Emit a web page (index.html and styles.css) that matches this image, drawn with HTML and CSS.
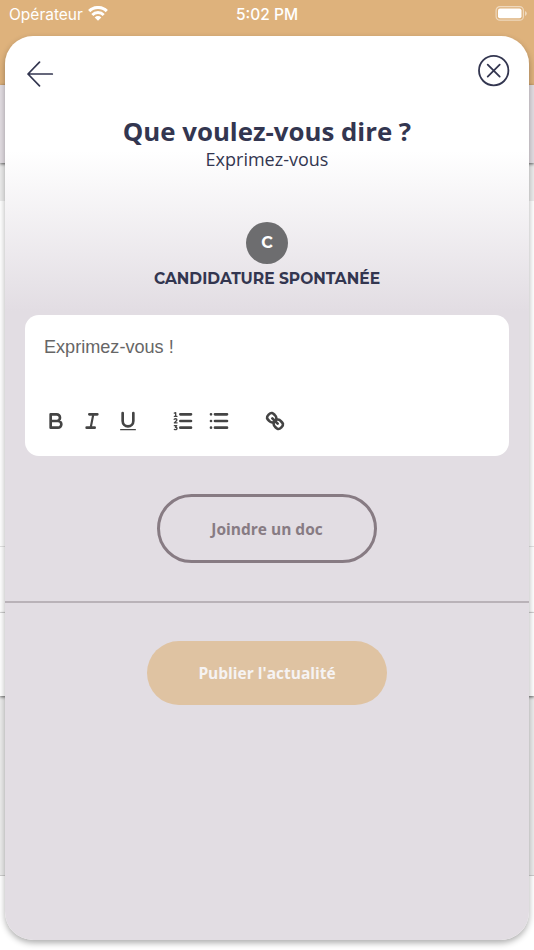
FILE: index.html
```html
<!DOCTYPE html>
<html lang="fr">
<head>
    <meta charset="UTF-8">
    <meta name="viewport" content="width=device-width, initial-scale=1.0">
    <title>Que voulez-vous dire ?</title>
    <link rel="stylesheet" href="styles.css">
</head>
<body>

    <!-- Feed behind the modal -->
    <div class="feed">
        <div class="feed-header">
            <div class="status-bar">
                <div class="carrier">
                    <span>Opérateur</span>
                    <svg width="20" height="15" viewBox="0 0 20 15">
                        <path d="M1.2 5.1a12.6 12.6 0 0 1 17.6 0" fill="none" stroke="#fff" stroke-width="3.1"/>
                        <path d="M4.3 8.9a8 8 0 0 1 11.4 0" fill="none" stroke="#fff" stroke-width="2.9"/>
                        <path d="M10 14.7l-3.3-3.2a4.6 4.6 0 0 1 6.6 0z" fill="#fff"/>
                    </svg>
                </div>
                <span class="time">5:02 PM</span>
                <svg class="battery" width="32" height="15" viewBox="0 0 32 15">
                    <rect x="1.1" y=".6" width="27.3" height="13.6" rx="3.8" fill="none" stroke="#fff" stroke-opacity=".5" stroke-width="1.2"/>
                    <rect x="3" y="2.5" width="23.5" height="9.8" rx="2" fill="#fff"/>
                    <path d="M30 5v5q1.8-.8 1.8-2.5T30 5z" fill="#fff" fill-opacity=".5"/>
                </svg>
            </div>
        </div>
        <div class="feed-tabs"></div>
        <div class="feed-gap"></div>
        <div class="feed-post"></div>
        <div class="feed-actions"></div>
        <div class="feed-comment"></div>
        <div class="feed-gap feed-gap-large"></div>
        <div class="feed-next"></div>
    </div>

    <div class="modal">
        <div class="modal-nav">
            <svg class="back" width="28" height="26" viewBox="0 0 28 26" fill="none" stroke="#333650" stroke-width="1.7" stroke-linecap="round" stroke-linejoin="round">
                <path d="M26.3 13H2M13.5 1.2L2 13L13.5 24.8"/>
            </svg>
            <svg class="close" width="32" height="32" viewBox="0 0 32 32" fill="none" stroke="#333650" stroke-width="1.8" stroke-linecap="round">
                <circle cx="15.7" cy="15.6" r="14.7"/>
                <path d="M9.7 9.6l12 12M21.7 9.6L9.7 21.6"/>
            </svg>
        </div>

        <h1>Que voulez-vous dire ?</h1>
        <p class="subtitle">Exprimez-vous</p>

        <div class="avatar">C</div>
        <h2>CANDIDATURE SPONTANÉE</h2>

        <div class="editor">
            <div class="placeholder">Exprimez-vous !</div>
            <div class="toolbar">
                <svg width="24" height="24" viewBox="0 0 18 18">
                    <path d="M5 4h4.5A2.5 2.5 0 0 1 12 6.5 2.5 2.5 0 0 1 9.5 9H5zM5 9h5.5a2.5 2.5 0 0 1 2.5 2.5 2.5 2.5 0 0 1-2.5 2.5H5z"/>
                </svg>
                <svg width="24" height="24" viewBox="0 0 18 18">
                    <path d="M7 4h6M5 14h6"/>
                    <path class="stem" d="M8 14l2-10"/>
                </svg>
                <svg width="24" height="24" viewBox="0 0 18 18">
                    <path d="M5 3v6a4 4 0 0 0 8 0V3"/>
                    <rect class="fill" x="3" y="15" width="12" height="1" rx=".5"/>
                </svg>
                <svg class="group-start" width="24" height="24" viewBox="0 0 18 18">
                    <path d="M7 4h8M7 9h8M7 14h8"/>
                    <path class="thin" d="M2.5 5.5h2M3.5 5.5V2.7l-1 .4M2.4 7.7q1.1-.8 1.9 0 .4.7-.4 1.3l-1.4 1.4h2.1M2.5 12.5h1.8l-1 1.2q1.3 0 1.2.9-.3 1.2-2 .7"/>
                </svg>
                <svg width="24" height="24" viewBox="0 0 18 18">
                    <path d="M6 4h9M6 9h9M6 14h9M3 4h.01M3 9h.01M3 14h.01"/>
                </svg>
                <svg class="group-start" width="24" height="24" viewBox="0 0 18 18">
                    <path d="M7 7l4 4"/>
                    <path d="M8.9 4.577a3.476 3.476 0 0 1 .36 4.679A3.476 3.476 0 0 1 4.577 8.9C3.185 7.5 2.035 6.4 4.217 4.217S7.5 3.185 8.9 4.577z"/>
                    <path d="M13.423 9.1a3.476 3.476 0 0 0-4.679-.36 3.476 3.476 0 0 0 .36 4.679c1.392 1.392 2.5 2.542 4.679.36s1.031-3.279-.36-4.679z"/>
                </svg>
            </div>
        </div>

        <button type="button" class="btn-attach">Joindre un doc</button>
        <hr>
        <button type="button" class="btn-publish">Publier l'actualité</button>
    </div>

</body>
</html>
```

FILE: styles.css
```css
* {
    box-sizing: border-box;
}
body {
    margin: 0;
    position: relative;
    height: 950px;
    overflow: hidden;
    font-family: "Open Sans", sans-serif;
    color: #333650;
    background-color: #fff;
}

/* Feed */
.feed-header {
    height: 85px;
    background-color: #deb27c;
}
.status-bar {
    display: grid;
    grid-template-columns: 1fr auto 1fr;
    align-items: center;
    height: 27px;
    padding: 0 7px 0 9px;
    color: #fff;
    font-family: Inter, sans-serif;
    font-size: 15.5px;
}
.carrier {
    display: flex;
    align-items: center;
    gap: 5px;
}
.carrier span,
.time {
    padding-top: 1px;
}
.time {
    margin-right: 2px;
    font-weight: 500;
}
.battery {
    justify-self: end;
}
.feed-tabs {
    position: relative;
    height: 78px;
    background-color: #e2dde2;
    box-shadow: 0 1px 3px rgba(0, 0, 0, 0.6);
}
.feed-gap {
    height: 38px;
    background-color: #ececec;
}
.feed-post {
    height: 346px;
    border-bottom: 1px solid #e2e2e2;
}
.feed-actions {
    height: 66px;
    border-bottom: 1px solid #e2e2e2;
}
.feed-comment {
    position: relative;
    height: 83px;
    background-color: #fff;
    box-shadow: 0 1px 3px rgba(0, 0, 0, 0.6);
}
.feed-gap-large {
    height: 180px;
    border-bottom: 1px solid #ccc;
}

/* Modal */
.modal {
    position: absolute;
    top: 36px;
    left: 5px;
    width: 524px;
    height: 904px;
    display: flex;
    flex-direction: column;
    align-items: center;
    border-radius: 28px;
    background: linear-gradient(#fff 115px, #e2dde3 275px);
    box-shadow: 0 3px 6px rgba(0, 0, 0, 0.32);
}
.modal-nav {
    display: flex;
    justify-content: space-between;
    align-items: flex-start;
    width: 100%;
    height: 77px;
    padding: 19px 19px 0 21px;
}
.back {
    margin-top: 6px;
}
h1 {
    margin: 0;
    font-size: 25.8px;
    line-height: 36px;
    font-weight: 700;
}
.subtitle {
    margin: -2px 0 0;
    font-size: 18px;
    line-height: 24px;
}
.avatar {
    display: flex;
    align-items: center;
    justify-content: center;
    width: 42px;
    height: 42px;
    margin-top: 51px;
    padding-bottom: 1px;
    border-radius: 50%;
    background-color: #6d6d6f;
    color: #fff;
    font-family: Montserrat, Inter, sans-serif;
    font-size: 16px;
    font-weight: 700;
}
h2 {
    margin: 4px 0 0;
    font-family: Montserrat, Inter, sans-serif;
    font-size: 15.5px;
    line-height: 22px;
    font-weight: 700;
    white-space: nowrap;
}
.editor {
    display: flex;
    flex-direction: column;
    justify-content: space-between;
    width: 484px;
    height: 141px;
    margin-top: 25px;
    padding: 21px 19px 23px;
    border-radius: 14px;
    background-color: #fff;
}
.placeholder {
    color: #666;
    font-family: "Liberation Sans", Arial, sans-serif;
    font-size: 18.1px;
    line-height: 22px;
}
.toolbar {
    display: flex;
    gap: 12px;
    margin-left: -0.5px;
}
.toolbar svg {
    fill: none;
    stroke: #444;
    stroke-width: 2;
    stroke-linecap: round;
    stroke-linejoin: round;
}
.toolbar .fill {
    fill: #444;
    stroke: none;
}
.toolbar .thin {
    stroke-width: 1;
}
.toolbar .stem {
    stroke-width: 1.6;
}
.toolbar .group-start {
    margin-left: 19.5px;
}
button {
    font-family: "Open Sans", sans-serif;
    font-size: 15.5px;
    font-weight: 700;
}
.btn-attach {
    width: 220px;
    height: 69px;
    margin-top: 38px;
    border: 3px solid #877b83;
    border-radius: 35px;
    background: none;
    color: #877b83;
}
hr {
    width: 100%;
    height: 2px;
    margin: 38px 0;
    border: none;
    background-color: #b9b2b8;
}
.btn-publish {
    width: 240px;
    height: 64px;
    border: none;
    border-radius: 32px;
    background-color: #dfc3a2;
    color: #f6f3f3;
}
```
